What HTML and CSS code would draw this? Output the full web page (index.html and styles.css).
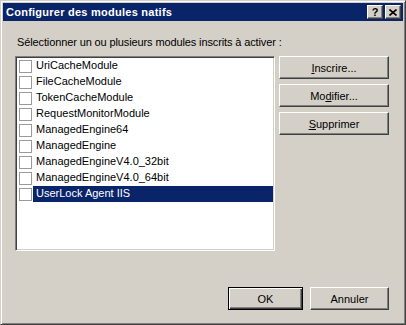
FILE: index.html
```html
<!DOCTYPE html>
<html lang="fr">
<head>
  <meta charset="UTF-8">
  <title>Configurer des modules natifs</title>
  <link rel="stylesheet" href="styles.css">
</head>
<body>
  <div class="dialog">
    <div class="titlebar">
      <span class="title">Configurer des modules natifs</span>
      <div class="caption-btns">
        <button class="cap help">?</button>
        <button class="cap close">
          <svg width="8" height="7" viewBox="0 0 8 7">
            <path d="M0.5 0.5 L7.5 6.5 M7.5 0.5 L0.5 6.5" stroke="#000" stroke-width="1.6" fill="none"/>
          </svg>
        </button>
      </div>
    </div>

    <div class="content">
      <p class="prompt">Sélectionner un ou plusieurs modules inscrits à activer :</p>

      <div class="main">
        <ul class="modules">
          <li><span class="check"></span><span class="name">UriCacheModule</span></li>
          <li><span class="check"></span><span class="name">FileCacheModule</span></li>
          <li><span class="check"></span><span class="name">TokenCacheModule</span></li>
          <li><span class="check"></span><span class="name">RequestMonitorModule</span></li>
          <li><span class="check"></span><span class="name">ManagedEngine64</span></li>
          <li><span class="check"></span><span class="name">ManagedEngine</span></li>
          <li><span class="check"></span><span class="name">ManagedEngineV4.0_32bit</span></li>
          <li><span class="check"></span><span class="name">ManagedEngineV4.0_64bit</span></li>
          <li class="selected"><span class="check"></span><span class="name">UserLock Agent IIS</span></li>
        </ul>

        <div class="side-btns">
          <button class="btn"><u>I</u>nscrire...</button>
          <button class="btn">Mo<u>d</u>ifier...</button>
          <button class="btn"><u>S</u>upprimer</button>
        </div>
      </div>

      <div class="footer">
        <button class="btn default ok">OK</button>
        <button class="btn cancel">Annuler</button>
      </div>
    </div>
  </div>
</body>
</html>
```

FILE: styles.css
```css
* {
  box-sizing: border-box;
}
body {
  margin: 0;
  font-family: 'Liberation Sans', Arial, sans-serif;
  font-size: 11px;
  color: #000;
  background: #d4d0c8;
}
.dialog {
  width: 406px;
  height: 325px;
  background: #d4d0c8;
  border: 1px solid;
  border-color: #d4d0c8 #404040 #404040 #d4d0c8;
  box-shadow: inset 1px 1px #fff, inset -1px -1px #808080;
  padding: 2px;
  display: flex;
  flex-direction: column;
}
.titlebar {
  height: 18px;
  background: #0a246a;
  display: flex;
  align-items: center;
  justify-content: space-between;
}
.title {
  color: #fff;
  font-weight: bold;
  font-size: 11px;
  letter-spacing: 0.25px;
  padding-left: 3px;
  line-height: 18px;
}
.caption-btns {
  display: flex;
  gap: 2px;
  margin-right: 2px;
}
.cap {
  width: 16px;
  height: 14px;
  padding: 0;
  margin: 0;
  background: #d4d0c8;
  border: 1px solid;
  border-color: #fff #404040 #404040 #fff;
  box-shadow: inset -1px -1px #808080;
  display: flex;
  align-items: center;
  justify-content: center;
  font-family: 'Liberation Sans', Arial, sans-serif;
  font-weight: bold;
  font-size: 11px;
  line-height: 12px;
  color: #000;
}
.content {
  flex: 1;
  padding: 0 14px 0 12px;
  display: flex;
  flex-direction: column;
}
.prompt {
  margin: 15px 0 0;
  padding-left: 2px;
  line-height: 13px;
  letter-spacing: -0.12px;
}
.main {
  display: flex;
  gap: 4px;
  margin-top: 7px;
}
.modules {
  list-style: none;
  margin: 0;
  padding: 1px;
  width: 260px;
  height: 195px;
  background: #fff;
  border: 1px solid;
  border-color: #808080 #fff #fff #808080;
  box-shadow: inset 1px 1px #404040, inset -1px -1px #d4d0c8;
}
.modules li {
  display: flex;
  align-items: center;
  height: 16px;
  padding-left: 2px;
}
.check {
  width: 13px;
  height: 13px;
  border: 1px solid #9a9a9a;
  background: #fff;
  flex: none;
}
.name {
  flex: 1;
  margin-left: 1px;
  padding: 0 0 1px 3px;
  line-height: 15px;
  white-space: nowrap;
  overflow: hidden;
}
.modules li.selected .name {
  background: #0a246a;
  color: #fff;
}
.side-btns {
  display: flex;
  flex-direction: column;
  gap: 5px;
  width: 110px;
}
.btn {
  height: 23px;
  padding: 0;
  margin: 0;
  font-family: 'Liberation Sans', Arial, sans-serif;
  font-size: 11px;
  color: #000;
  background: #d4d0c8;
  border: 1px solid;
  border-color: #fff #404040 #404040 #fff;
  box-shadow: inset -1px -1px #808080;
}
.btn u {
  text-decoration: underline;
}
.footer {
  display: flex;
  justify-content: flex-end;
  gap: 7px;
  margin-top: 36px;
}
.ok {
  width: 75px;
}
.cancel {
  width: 79px;
}
.btn.default {
  border: 1px solid #000;
  box-shadow: inset 1px 1px #fff, inset -1px -1px #404040, inset -2px -2px #808080;
}
```
